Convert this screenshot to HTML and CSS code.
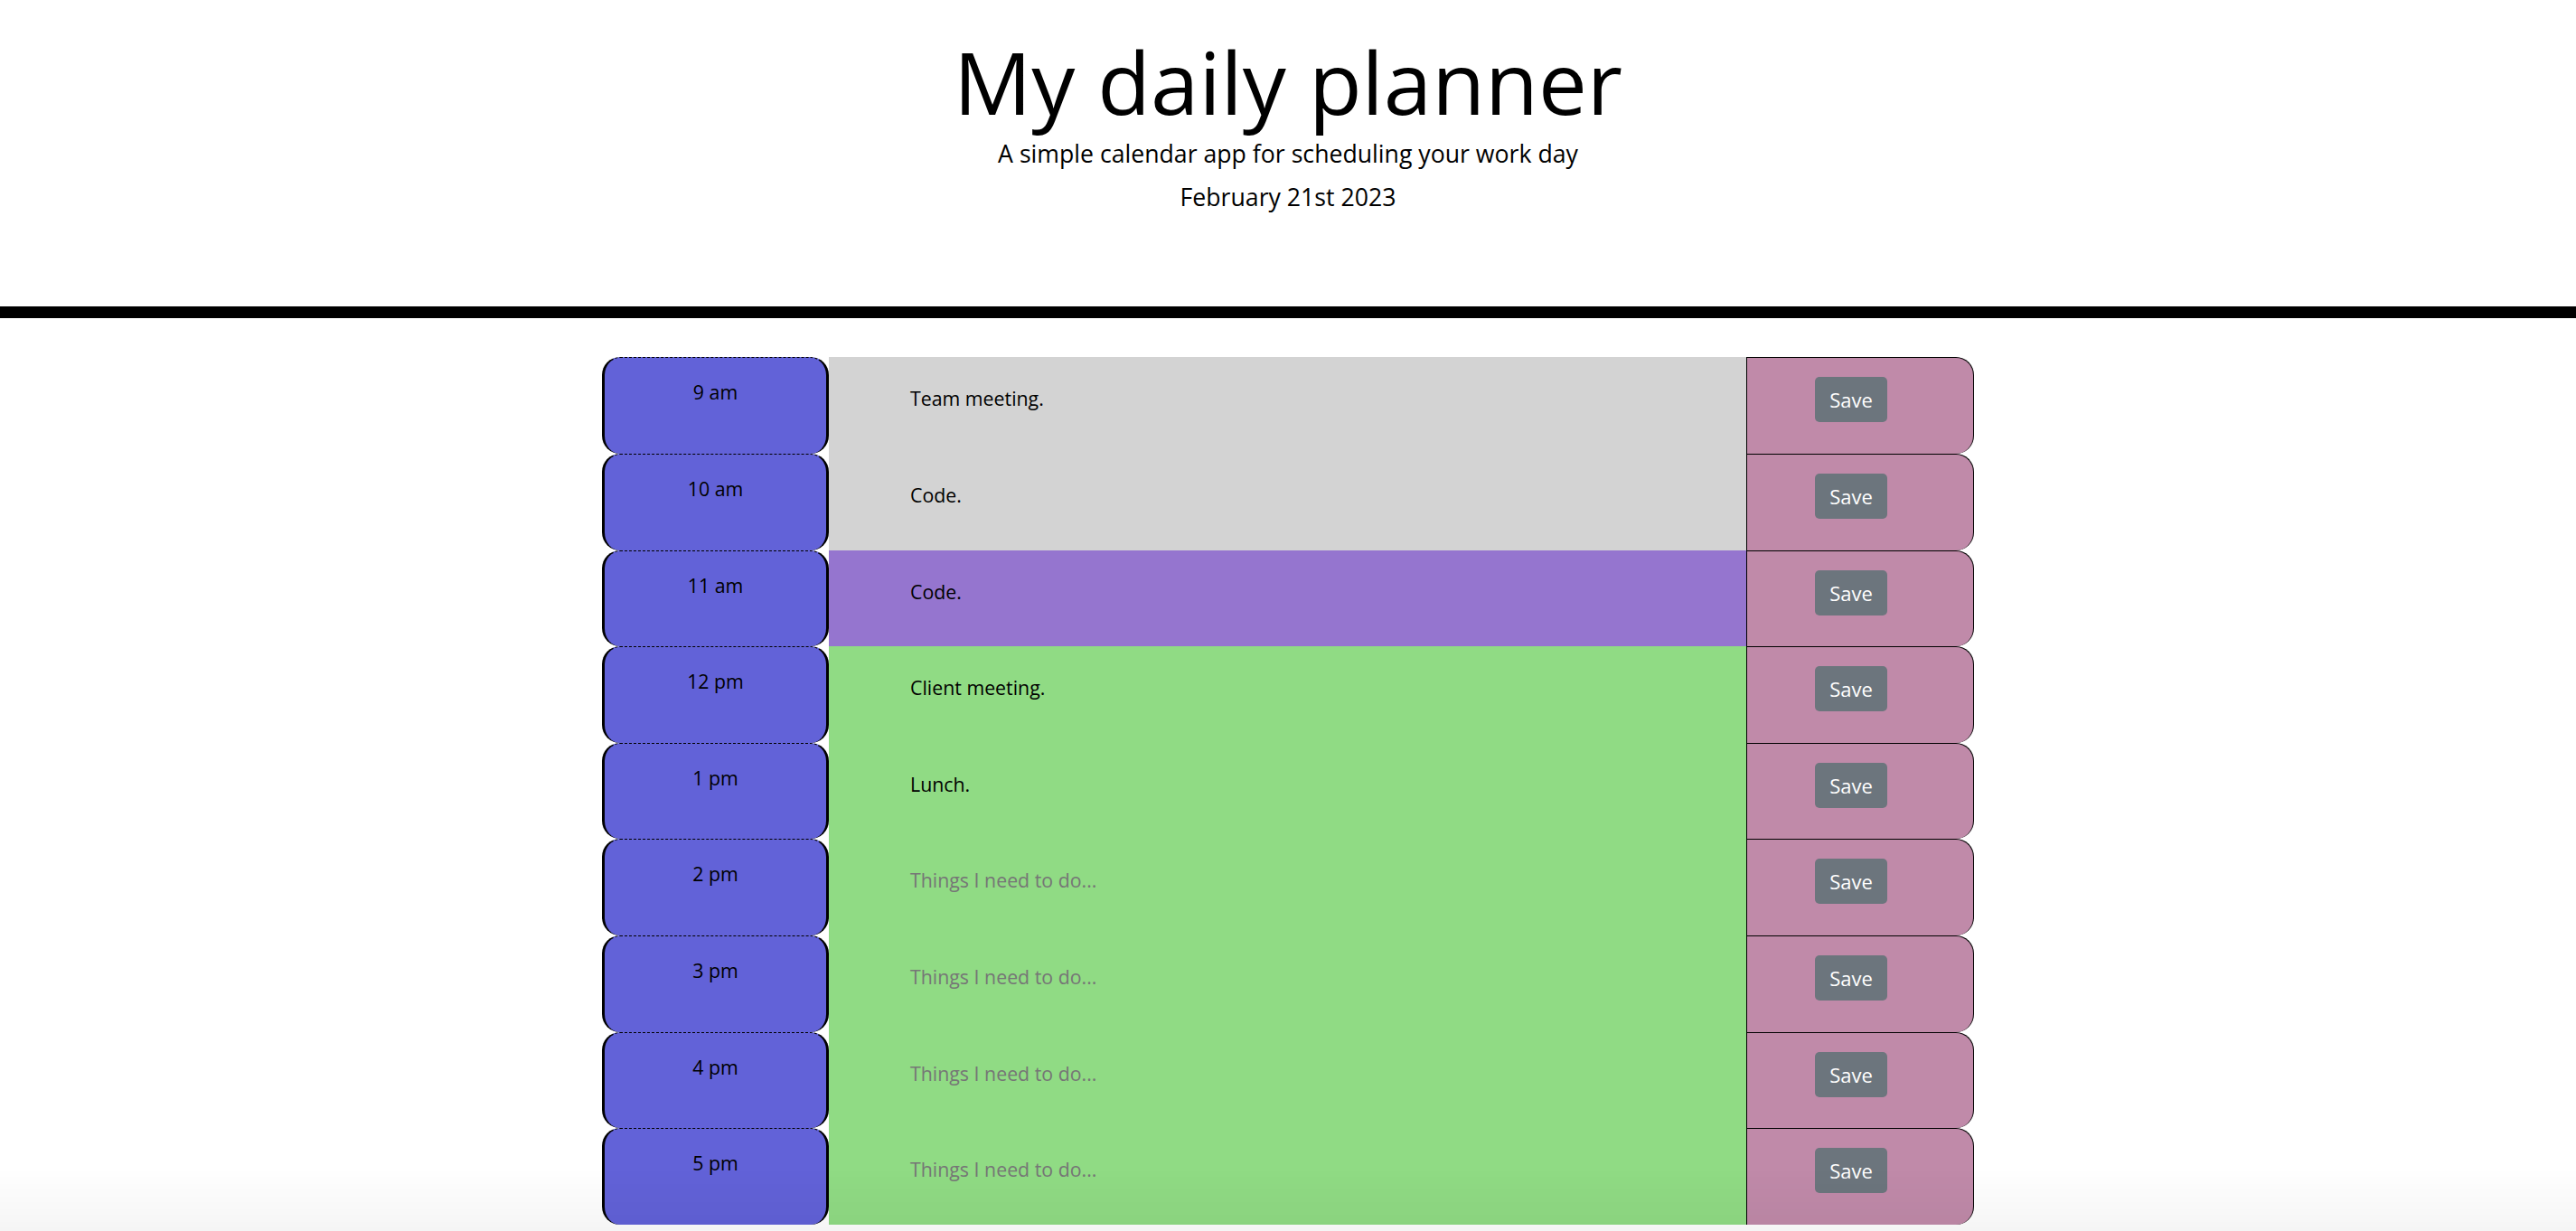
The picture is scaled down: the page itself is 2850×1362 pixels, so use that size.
FILE: index.html
```html
<!DOCTYPE html>
<html lang="en">
<head>
<meta charset="utf-8">
<title>Work Day Scheduler</title>
<link rel="stylesheet" href="styles.css">
</head>
<body>
<header class="jumbotron">
  <h1 class="title">My daily planner</h1>
  <p class="lead">A simple calendar app for scheduling your work day</p>
  <p class="current-day">February 21st 2023</p>
</header>
<main class="planner">
  <div class="time-row">
    <div class="hour">9 am</div>
    <textarea class="description past" rows="3">Team meeting.</textarea>
    <div class="save-cell"><button class="save-btn">Save</button></div>
  </div>
  <div class="time-row">
    <div class="hour">10 am</div>
    <textarea class="description past" rows="3">Code.</textarea>
    <div class="save-cell"><button class="save-btn">Save</button></div>
  </div>
  <div class="time-row">
    <div class="hour">11 am</div>
    <textarea class="description present" rows="3">Code.</textarea>
    <div class="save-cell"><button class="save-btn">Save</button></div>
  </div>
  <div class="time-row">
    <div class="hour">12 pm</div>
    <textarea class="description future" rows="3">Client meeting.</textarea>
    <div class="save-cell"><button class="save-btn">Save</button></div>
  </div>
  <div class="time-row">
    <div class="hour">1 pm</div>
    <textarea class="description future" rows="3">Lunch.</textarea>
    <div class="save-cell"><button class="save-btn">Save</button></div>
  </div>
  <div class="time-row">
    <div class="hour">2 pm</div>
    <textarea class="description future" rows="3" placeholder="Things I need to do..."></textarea>
    <div class="save-cell"><button class="save-btn">Save</button></div>
  </div>
  <div class="time-row">
    <div class="hour">3 pm</div>
    <textarea class="description future" rows="3" placeholder="Things I need to do..."></textarea>
    <div class="save-cell"><button class="save-btn">Save</button></div>
  </div>
  <div class="time-row">
    <div class="hour">4 pm</div>
    <textarea class="description future" rows="3" placeholder="Things I need to do..."></textarea>
    <div class="save-cell"><button class="save-btn">Save</button></div>
  </div>
  <div class="time-row">
    <div class="hour">5 pm</div>
    <textarea class="description future" rows="3" placeholder="Things I need to do..."></textarea>
    <div class="save-cell"><button class="save-btn">Save</button></div>
  </div>
</main>
<div class="bottom-shade"></div>
</body>
</html>
```
FILE: styles.css
```css
html, body {
  margin: 0;
  padding: 0;
  background: #ffffff;
}

body {
  font-family: "Open Sans", "Liberation Sans", sans-serif;
  font-size: 21.33px;
  line-height: 1.5;
  color: #000000;
  overflow: hidden;
}

.jumbotron {
  text-align: center;
  padding: 32px 0 101px;
  border-bottom: 13px solid #000000;
  margin-bottom: 43px;
}

.title {
  margin: 0;
  font-size: 96px;
  font-weight: 400;
  line-height: 1.2;
}

.lead {
  margin: 3px 0 0;
  font-size: 26.67px;
  font-weight: 400;
  line-height: 1.5;
}

.current-day {
  margin: 8px 0 0;
  font-size: 26.67px;
  font-weight: 400;
  line-height: 1.5;
}

.planner {
  width: 1518px;
  margin: 0 auto;
}

.time-row {
  display: grid;
  grid-template-columns: 251px 1fr 252px;
  height: 106.67px;
}

.hour {
  box-sizing: border-box;
  background-color: #6262d8;
  border: 3px solid #000000;
  border-top: 1px dashed #000000;
  border-bottom: none;
  border-radius: 20px;
  text-align: center;
  padding-top: 22px;
  font-size: 21.33px;
}

.description {
  box-sizing: border-box;
  display: block;
  width: 100%;
  height: 106.67px;
  margin: 0;
  border: none;
  resize: none;
  outline: none;
  padding: 30px 20px 0 90px;
  font-family: "Open Sans", "Liberation Sans", sans-serif;
  font-size: 21.33px;
  line-height: 1.5;
  color: #000000;
  white-space: pre-wrap;
  overflow: hidden;
}

.description::placeholder {
  color: #767676;
  opacity: 1;
}

.past {
  background-color: #d3d3d3;
}

.present {
  background-color: #9575cf;
}

.future {
  background-color: #90db84;
}

.save-cell {
  box-sizing: border-box;
  background-color: #c08aa9;
  border: 1px solid #000000;
  border-bottom: none;
  border-top-right-radius: 20px;
  border-bottom-right-radius: 20px;
  padding: 21px 0 0 75px;
}

.save-btn {
  display: block;
  width: 80px;
  height: 50px;
  padding: 0;
  border: none;
  border-radius: 5px;
  background-color: #6c757d;
  color: #ffffff;
  font-family: "Open Sans", "Liberation Sans", sans-serif;
  font-size: 22px;
  line-height: 50px;
  text-align: center;
}

.bottom-shade {
  position: fixed;
  left: 0;
  right: 0;
  bottom: 0;
  height: 70px;
  pointer-events: none;
  background: linear-gradient(to bottom, rgba(0, 0, 0, 0), rgba(0, 0, 0, 0.04));
}
```
